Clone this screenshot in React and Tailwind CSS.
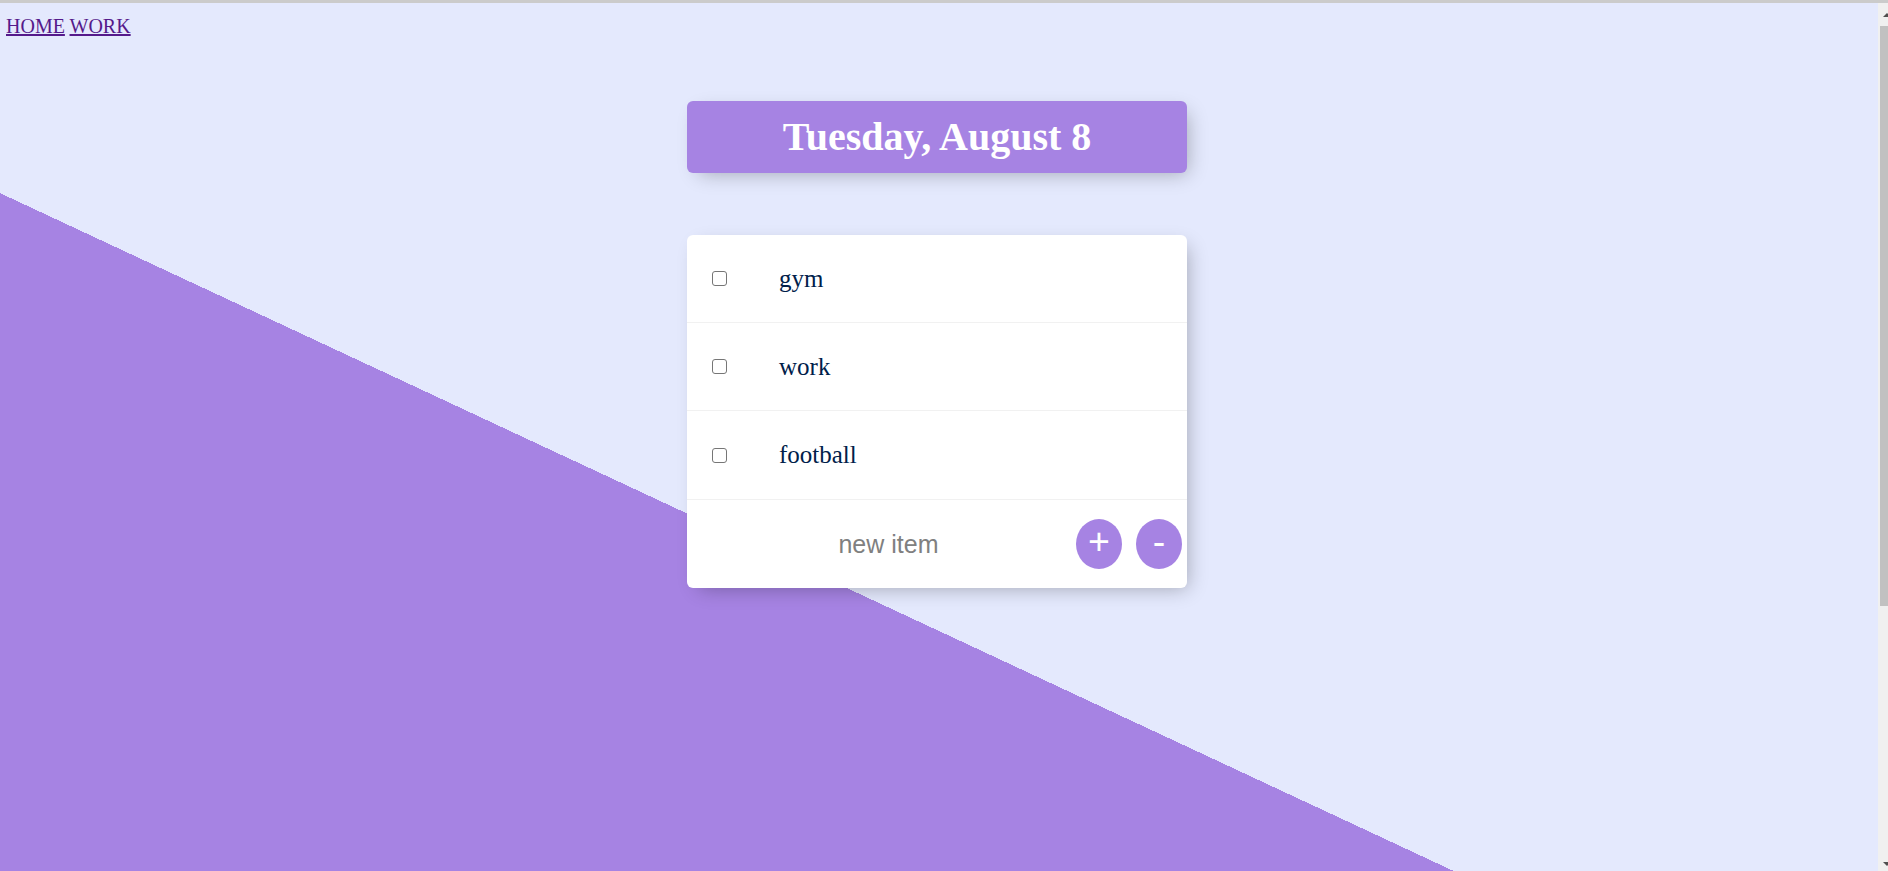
const items = ['gym', 'work', 'football'];

const serif = { fontFamily: '"Liberation Serif", "Times New Roman", serif' };
const sans = { fontFamily: '"Liberation Sans", Arial, sans-serif' };

const Scrollbar = () => (
  <div className="w-[10px] shrink-0 bg-[#f0f0f0] flex flex-col">
    <div className="h-[23px] flex items-center">
      <svg width="10" height="8" viewBox="0 0 10 8">
        <polygon points="5,6 9,2 13,6" fill="#505050" />
      </svg>
    </div>
    <div className="ml-[2px] h-[580px] bg-[#c1c1c1]"></div>
    <div className="flex-1"></div>
    <div className="h-[10px] flex items-start">
      <svg width="10" height="8" viewBox="0 0 10 8">
        <polygon points="5,1 13,1 9,5" fill="#505050" />
      </svg>
    </div>
  </div>
);

const App = () => {
  return (
    <div className="h-[871px] overflow-hidden flex flex-col bg-[#e4e9fd]" style={serif}>
      <div className="h-[3px] shrink-0 bg-[#cbcbcb]"></div>
      <div className="flex flex-1 min-h-0">
        <div className="flex-1 min-w-0 overflow-hidden">
          <div className="h-[1256px] bg-[linear-gradient(25deg,#a683e3_50%,#e4e9fd_50%)]">
            <nav className="pt-[12px] pl-[6px] text-[20px] leading-[23px]">
              <a href="#" className="text-[#551a8b] underline">HOME</a>{' '}
              <a href="#" className="text-[#551a8b] underline">WORK</a>
            </nav>

            <main className="pr-[4px]">
              <div className="w-[500px] mx-auto mt-[63px] h-[72px] flex items-center justify-center rounded-[6px] bg-[#a683e3] shadow-[6px_6px_19px_-6px_rgba(0,0,0,0.3)]">
                <h1 className="text-[40px] font-bold text-white">Tuesday, August 8</h1>
              </div>

              <div className="w-[500px] mx-auto mt-[62px] rounded-[6px] bg-white shadow-[6px_6px_19px_-6px_rgba(0,0,0,0.3)]">
                {items.map((item, i) => (
                  <div
                    key={item}
                    className={`flex items-center border-b border-[#f1f1f1] ${i === 2 ? 'h-[89px]' : 'h-[88px]'}`}
                  >
                    <input
                      type="checkbox"
                      className="appearance-none ml-[25px] w-[15px] h-[15px] border border-[#767676] rounded-[3px] bg-white shrink-0"
                    />
                    <p className="ml-[52px] text-[25px] text-[#00204a]">{item}</p>
                  </div>
                ))}
                <form className="h-[88px] flex items-center" onSubmit={(e) => e.preventDefault()}>
                  <input
                    type="text"
                    placeholder="new item"
                    className="ml-[25px] w-[353px] h-[75px] bg-transparent text-center text-[25px] outline-none placeholder:text-[#808080]"
                    style={sans}
                  />
                  <button
                    type="submit"
                    className="ml-[11px] w-[46px] h-[50px] rounded-[50%] bg-[#a683e3] text-white text-[37.5px] leading-none flex items-center justify-center pb-[4px]"
                    style={sans}
                  >
                    +
                  </button>
                  <button
                    type="button"
                    className="ml-[14px] w-[46px] h-[50px] rounded-[50%] bg-[#a683e3] text-white text-[37.5px] leading-none flex items-center justify-center pb-[4px]"
                    style={sans}
                  >
                    -
                  </button>
                </form>
              </div>
            </main>
          </div>
        </div>
        <Scrollbar />
      </div>
    </div>
  );
};

export default App;
